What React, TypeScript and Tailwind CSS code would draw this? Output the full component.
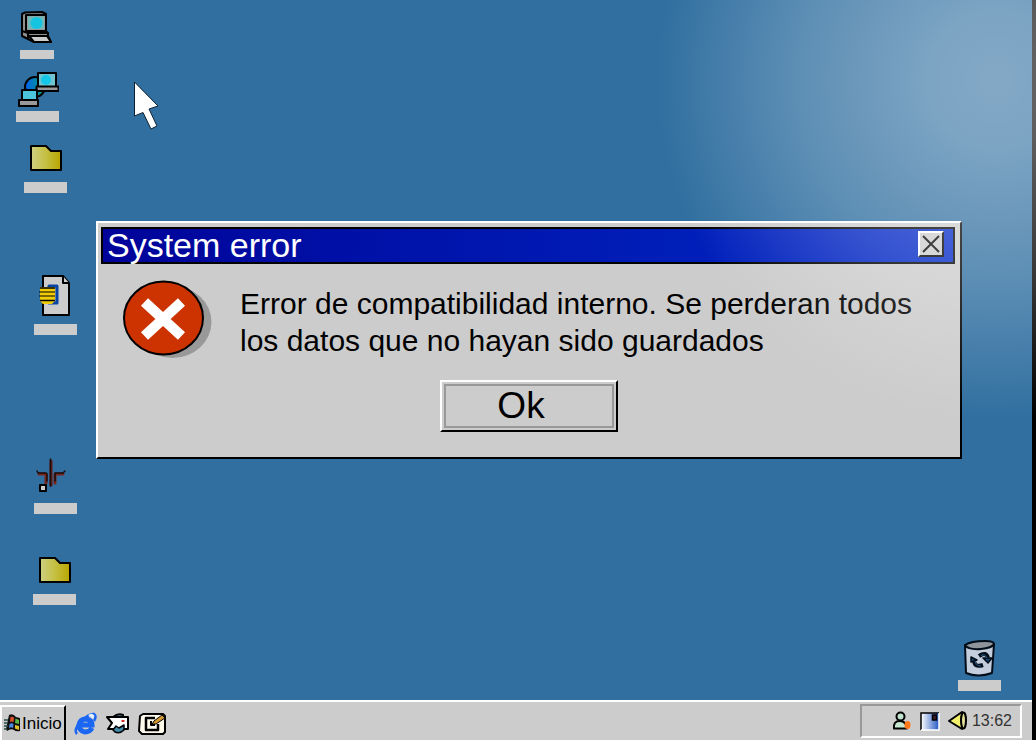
import type { ReactNode } from "react";

type ShortcutProps = { name: string; place: string; label: string; children: ReactNode };

function Shortcut({ name, place, label, children }: ShortcutProps) {
  return (
    <button type="button" aria-label={name} className={`absolute flex flex-col items-center ${place}`}>
      {children}
      <span className={`bg-[#ccc] ${label}`} />
    </button>
  );
}

function ComputerIcon() {
  return (
    <svg width="34" height="34" viewBox="0 0 34 34" stroke="#000" strokeWidth="2" strokeLinejoin="round">
      <path d="M2 3 5 1.500 22 1 26 3V20L28 22V25L31 31H14L2 25Z" fill="#8f8f8f" />
      <rect x="6" y="4" width="20" height="16" fill="#999" />
      <rect x="8" y="5.500" width="16" height="12.500" fill="#6fb9bd" stroke="none" />
      <circle cx="16.500" cy="12" r="6" fill="#14c4e0" stroke="none" />
      <path d="M2 20 8 22H28M8 22V27" fill="none" />
      <path d="M9 25H27L31 31H14Z" fill="#ccc" />
    </svg>
  );
}

function NetworkIcon() {
  return (
    <svg width="42" height="37" viewBox="0 0 42 37" stroke="#000" strokeWidth="2" strokeLinejoin="round">
      <defs>
        <linearGradient id="globe"><stop stopColor="#0060f0" /><stop offset="1" stopColor="#00a878" /></linearGradient>
      </defs>
      <circle cx="18" cy="16" r="10" fill="url(#globe)" />
      <rect x="21" y="2" width="18" height="14" fill="#72c5d0" />
      <circle cx="29" cy="9" r="5" fill="#13c8e8" stroke="none" />
      <rect x="19.500" y="15.500" width="22" height="4.500" fill="#999" />
      <rect x="5" y="19" width="15" height="10" fill="#4cc5dc" />
      <rect x="2" y="29" width="19" height="6" fill="#999" />
    </svg>
  );
}

function FolderIcon() {
  return (
    <svg width="34" height="28" viewBox="0 0 34 28">
      <defs>
        <linearGradient id="folder"><stop stopColor="#cdd083" /><stop offset=".5" stopColor="#c5bf42" /><stop offset="1" stopColor="#b9a600" /></linearGradient>
      </defs>
      <path d="M2 2H17L22 7H32V26H2Z" fill="url(#folder)" stroke="#000" strokeWidth="2" strokeLinejoin="round" />
    </svg>
  );
}

function DocumentIcon() {
  return (
    <svg width="34" height="42" viewBox="0 0 34 42" stroke="#000" strokeWidth="2" strokeLinejoin="round">
      <path d="M5 1H25L31 8V40H5Z" fill="#ccc" />
      <path d="M25 1V8H31" fill="#ccc" />
      <rect x="11" y="11" width="8" height="17" fill="#bbb" stroke="#0645a4" strokeWidth="3" />
      <path d="M2 12H17V26L14 29H5L2 26Z" fill="#f0cc08" stroke="none" />
      <path d="M2 13H17M2 25.500H17" strokeWidth="1.500" />
      <path d="M1 17H17M1 21H17" strokeWidth="1" />
    </svg>
  );
}

function ToolIcon() {
  return (
    <svg width="32" height="36" viewBox="0 0 32 36" fill="none" strokeLinecap="round" strokeLinejoin="round">
      <path d="M16 4V28" stroke="#6a1c14" strokeWidth="3" />
      <path d="M4 17H11V26M28 17H20V26" stroke="#7b241b" strokeWidth="3" />
      <path d="M15.500 2V29M2 14 3 16H11L12 17V24M30 14 28 16H20V24" stroke="#160d0d" strokeWidth="1.500" />
      <rect x="5" y="28" width="6" height="6" fill="#ccc" stroke="#000" strokeWidth="2" />
    </svg>
  );
}

function BinIcon() {
  return (
    <svg width="34" height="38" viewBox="0 0 34 38" stroke="#000d18" strokeWidth="2" strokeLinejoin="round">
      <path d="M2 5 3 33Q15 38 29 33L31 4Z" fill="#c5cedd" />
      <path d="M2 5Q8 1 22 1Q31 1 31 4Q29 8 18 9Q5 10 2 5Z" fill="#8e949a" />
      <g fill="none" stroke="#000d18" strokeWidth="4">
        <path d="M16 16Q23 11 25 18" /><path d="M11 20Q11 28 20 25" />
      </g>
      <path d="M20 18H29L25 23ZM8 22V17L14 20Z" fill="#18436a" strokeWidth="1.500" />
      <path d="M12 21Q13 26 18 26M18 15.500Q22 13.500 24 18" fill="none" stroke="#2b5f90" strokeWidth="1" />
    </svg>
  );
}

function ErrorIcon() {
  return (
    <svg className="shrink-0" width="92" height="82" viewBox="0 0 92 82">
      <ellipse cx="50.500" cy="44" rx="39" ry="36" fill="#999" />
      <ellipse cx="41.500" cy="40" rx="39.500" ry="36.500" fill="#c30" stroke="#000" strokeWidth="2" />
      <path d="M22.500 24 59.500 58M59.500 24 22.500 58" stroke="#fff" strokeWidth="10.500" />
    </svg>
  );
}

function Pointer() {
  return (
    <svg className="absolute top-[80px] left-[132px]" width="30" height="52" viewBox="0 0 30 52">
      <path d="M2.500 2V36L11 32.500 19 49 25 46 17 29 26 26Z" fill="#fff" stroke="#102030" strokeWidth="1" />
    </svg>
  );
}

function FlagIcon() {
  return (
    <svg width="17" height="20" viewBox="0 0 17 20">
      <path d="M5 1Q9-1 12 3L16 4V17Q12 18 10 16Q7 14 3 17L2 15Z" fill="#101010" />
      <path d="M6.500 3Q9 2 10 4L9.500 8Q7.500 7 6 8Z" fill="#e0522a" />
      <path d="M11.500 4.500 15 6V10L11 9Z" fill="#59b742" />
      <path d="M5.500 10Q8 8.500 9.500 10L9 14Q7 12.500 5 14Z" fill="#4b8be6" />
      <path d="M11 11 15 12V16L11 14.500Z" fill="#e3c126" />
      <path d="M0 6H4M0 9H4M0 12H4M0 15H3" stroke="#284c45" strokeWidth="1.500" />
    </svg>
  );
}

function BrowserIcon() {
  return (
    <svg width="24" height="24" viewBox="0 0 24 24" fill="none">
      <path d="M18 16Q16 20 11 20Q5 19 5 13Q6 7 12 7Q18 8 18 13H7" stroke="#1b66f2" strokeWidth="5" />
      <path d="M3 22Q-1 18 7 9Q16 1 20 2Q23 4 20 9" stroke="#1b66f2" strokeWidth="2.500" />
      <path d="M15 4Q18 2 19 4L18 6" stroke="#e4f0ff" strokeWidth="2.500" />
    </svg>
  );
}

function MailIcon() {
  return (
    <svg width="24" height="22" viewBox="0 0 24 22" stroke="#000" strokeWidth="2" strokeLinejoin="round">
      <path d="M7 4Q12 0 17 2V5H7Z" fill="#4f95b0" />
      <path d="M1 4H22V16H2L6 10Z" fill="#fff" />
      <path d="M15.500 8H18.500" stroke="#ce3028" />
      <path d="M10 13 13 15 18 12V17Q14 21 9 19L7 17Z" fill="#4088a8" strokeWidth="1.500" />
    </svg>
  );
}

function NotepadIcon() {
  return (
    <svg width="30" height="24" viewBox="0 0 30 24" stroke="#000" strokeWidth="2" strokeLinejoin="round">
      <path d="M2 4 5 2H25L27 4V20L25 22H4L1 19Z" fill="#fffced" />
      <path d="M17 6H8V18H20V12" fill="none" strokeWidth="2.500" />
      <path d="M13 9V13H17" fill="none" />
      <path d="M14 12 16 9 24 3 27 6 18 12Z" fill="#d69a35" strokeWidth="1" />
    </svg>
  );
}

function UserIcon() {
  return (
    <svg width="20" height="20" viewBox="0 0 20 20">
      <path d="M2 17.500Q1 10 8 10Q14 10 15 17.500Z" fill="#c6e7cf" stroke="#000" strokeWidth="2" strokeLinejoin="round" />
      <circle cx="8.500" cy="5.500" r="4" fill="#c0e2d0" stroke="#000" strokeWidth="2" />
      <ellipse cx="15.500" cy="14" rx="3" ry="4" fill="#ff791b" />
    </svg>
  );
}

function DisplayIcon() {
  return (
    <svg width="20" height="19" viewBox="0 0 20 19">
      <defs><linearGradient id="display"><stop stopColor="#fff" /><stop offset="1" stopColor="#2558c4" /></linearGradient></defs>
      <rect x="1" y="1" width="18" height="17" fill="url(#display)" />
      <path d="M1 18V1H19" fill="none" stroke="#000" strokeWidth="1.500" />
      <path d="M19 1V18H1" fill="none" stroke="#fff" strokeWidth="1.500" />
      <rect x="12.500" y="3" width="4" height="5" fill="#421b29" stroke="#000" strokeWidth="1.500" />
    </svg>
  );
}

function SpeakerIcon() {
  return (
    <svg width="20" height="20" viewBox="0 0 20 20" stroke="#000" strokeWidth="2" strokeLinejoin="round">
      <path d="M1 10 14 1V18Z" fill="#f1ef6c" /><ellipse cx="15.500" cy="9.500" rx="2.500" ry="8" fill="#dfdb93" />
    </svg>
  );
}

function ErrorDialog() {
  return (
    <section
      role="dialog"
      aria-labelledby="error-title"
      aria-describedby="error-message"
      className="absolute top-[221px] right-[70px] left-24 border-2 border-t-white border-r-black border-b-black border-l-white bg-[#ccc] px-[3px] pt-1 pb-[25px]"
    >
      <header className="mr-[2px] flex h-[37px] items-start justify-between border-2 border-black bg-linear-to-r from-[#000399] to-[#0028c8] pr-[9px] pl-1">
        <h1 id="error-title" className="text-[34px] leading-8 text-white">System error</h1>
        <button type="button" aria-label="Cerrar" className="mt-[2px] flex size-[26px] items-center justify-center border-2 border-t-white border-r-black border-b-black border-l-white bg-[#ccc]">
          <svg width="18" height="18" viewBox="0 0 18 18" stroke="#000" strokeWidth="2"><path d="M1 1 17 17M17 1 1 17" /></svg>
        </button>
      </header>
      <div className="flex items-start gap-[26px] pt-[14px] pl-[21px]">
        <ErrorIcon />
        <p id="error-message" className="max-w-[690px] pt-[7px] text-[30px] leading-[37px]">
          Error de compatibilidad interno. Se perderan todos los datos que no hayan sido guardados
        </p>
      </div>
      <div className="flex justify-center pt-5">
        <button type="button" className="h-[52px] w-[178px] border-2 border-t-white border-r-black border-b-black border-l-white p-[2px] text-[37px] leading-[42px]">
          <span className="flex h-full items-center justify-center border-2 border-[#999] pr-4">Ok</span>
        </button>
      </div>
    </section>
  );
}

export default function App() {
  return (
    <div className="relative flex min-h-screen overflow-hidden bg-[#306fa0] font-['Liberation_Sans',Arial,sans-serif] text-black">
      <div className="flex flex-1 flex-col">
        <main className="relative flex-1">
          <Shortcut name="Equipo" place="top-[11px] left-5 gap-[5px]" label="h-[9px] w-[34px]"><ComputerIcon /></Shortcut>
          <Shortcut name="Red" place="top-[71px] left-4 gap-[3px]" label="h-[11px] w-[43px]"><NetworkIcon /></Shortcut>
          <Shortcut name="Carpeta" place="top-[144px] left-6 gap-[10px]" label="h-[11px] w-[43px]"><FolderIcon /></Shortcut>
          <Shortcut name="Documento" place="top-[275px] left-[34px] items-start! gap-[7px]" label="h-[11px] w-[43px]"><span className="pl-1"><DocumentIcon /></span></Shortcut>
          <Shortcut name="Herramienta" place="top-[457px] left-[34px] items-start! gap-[10px]" label="h-[11px] w-[43px]"><span className="pl-px"><ToolIcon /></span></Shortcut>
          <Shortcut name="Documentos" place="top-[556px] left-[33px] gap-[10px]" label="h-[11px] w-[43px]"><FolderIcon /></Shortcut>
          <Shortcut name="Papelera" place="right-[31px] bottom-[9px] gap-[2px]" label="h-[11px] w-[43px]"><BinIcon /></Shortcut>
          <Pointer />
          <ErrorDialog />
        </main>
        <footer className="flex h-10 items-end justify-between border-t-2 border-white bg-[#ccc]">
          <nav className="flex items-end">
            <button type="button" className="flex h-[35px] w-[66px] items-center gap-px border-t-2 border-r-2 border-l-2 border-t-white border-r-black border-l-white pl-[2px] text-[17px] leading-6">
              <FlagIcon />
              Inicio
            </button>
            <div className="flex h-[33px] items-center gap-2 pl-2">
              <button type="button" aria-label="Navegador"><BrowserIcon /></button>
              <button type="button" aria-label="Correo"><MailIcon /></button>
              <button type="button" aria-label="Notas"><NotepadIcon /></button>
            </div>
          </nav>
          <div className="mr-[10px] mb-[2px] flex h-[34px] items-center gap-2 border-2 border-t-[#999] border-r-white border-b-white border-l-[#999] pr-2 pl-[30px]">
            <UserIcon />
            <DisplayIcon />
            <SpeakerIcon />
            <time className="-ml-1 text-[16px] leading-5 text-[#333]">13:62</time>
          </div>
        </footer>
      </div>
      <div className="w-1 bg-black" />
      <div className="pointer-events-none absolute top-[-260px] right-[-300px] h-[680px] w-[680px] rounded-full bg-[radial-gradient(closest-side,rgba(255,255,255,0.4),rgba(255,255,255,0.37)_20%,rgba(255,255,255,0.21)_60%,transparent)]" />
    </div>
  );
}
